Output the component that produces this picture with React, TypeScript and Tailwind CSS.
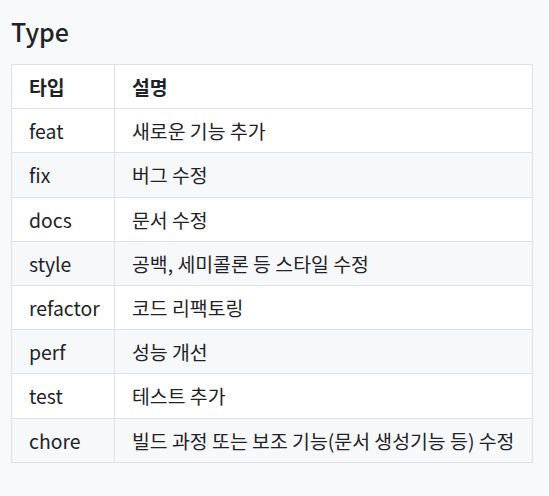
const rows = [
  ["feat", "새로운 기능 추가"],
  ["fix", "버그 수정"],
  ["docs", "문서 수정"],
  ["style", "공백, 세미콜론 등 스타일 수정"],
  ["refactor", "코드 리팩토링"],
  ["perf", "성능 개선"],
  ["test", "테스트 추가"],
  ["chore", "빌드 과정 또는 보조 기능(문서 생성기능 등) 수정"],
];

export default function App() {
  return (
    <main
      className="min-h-screen bg-[#f8f9fa] px-[11px] pt-[14px] text-[#1f2328]"
      style={{ fontFamily: '"Noto Sans CJK KR", "Noto Sans", sans-serif' }}
    >
      <h2 className="text-[25px] font-medium leading-[34px]">Type</h2>
      <table className="mt-[16px] w-[522px] table-fixed border-collapse whitespace-nowrap text-[19.4px]">
        <thead>
          <tr className="h-[44.2px] bg-white">
            <th className="w-[103px] border border-[#dfe2e5] px-[17px] text-left font-semibold">타입</th>
            <th className="border border-[#dfe2e5] px-[17px] text-left font-semibold">설명</th>
          </tr>
        </thead>
        <tbody>
          {rows.map(([type, desc], i) => (
            <tr key={type} className={i % 2 === 1 ? "h-[44.2px] bg-[#f6f8fa]" : "h-[44.2px] bg-white"}>
              <td className="border border-[#dfe2e5] px-[17px]">{type}</td>
              <td className="border border-[#dfe2e5] px-[17px]">{desc}</td>
            </tr>
          ))}
        </tbody>
      </table>
    </main>
  );
}
